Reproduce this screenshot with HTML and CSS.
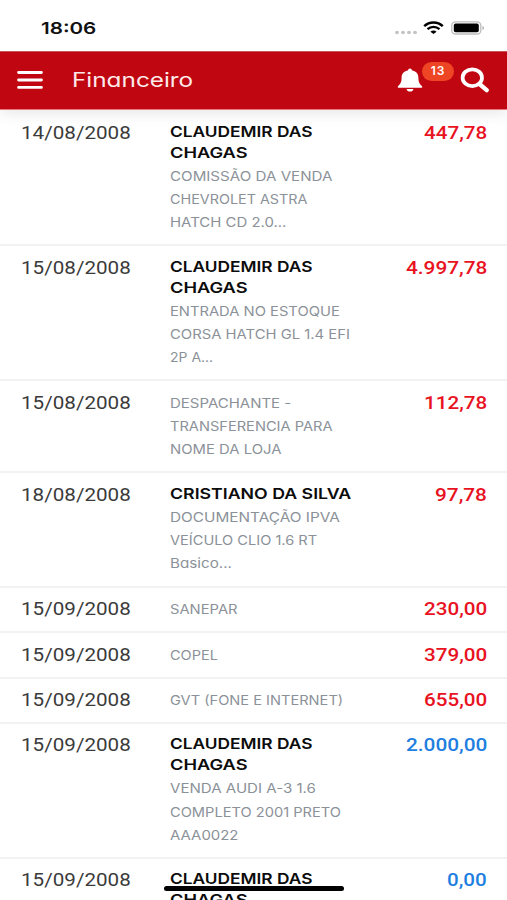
FILE: index.html
```html
<!DOCTYPE html>
<html lang="pt-BR">
<head>
<meta charset="utf-8">
<title>Financeiro</title>
<link rel="stylesheet" href="styles.css">
</head>
<body>
<div class="screen">
  <div class="status">
    <span class="clock" data-width="55">18:06</span>
    <div class="status-icons">
      <svg class="signal" width="24" height="5" viewBox="0 0 24 5" fill="#c4c4c4"><ellipse cx="3" cy="2.5" rx="2" ry="1.7"/><ellipse cx="9" cy="2.5" rx="2" ry="1.7"/><ellipse cx="15" cy="2.5" rx="2" ry="1.7"/><ellipse cx="21" cy="2.5" rx="2" ry="1.7"/></svg>
      <svg class="wifi" width="21" height="14" viewBox="0 0 21 14" fill="none" stroke="#000"><path d="M1.2 5.1C6.4.2 14.6.2 19.8 5.1" stroke-width="2.5"/><path d="M4.5 8.2c3.5-3.1 8.5-3.1 12 0" stroke-width="2.3"/><path d="M7.4 10.7c1.8-1.5 4.4-1.5 6.2 0L10.5 13z" fill="#000" stroke="none"/></svg>
      <svg class="battery" width="34" height="14" viewBox="0 0 34 14"><rect x=".8" y=".8" width="29" height="12.2" rx="3.6" fill="#fff" stroke="#bdbdbd" stroke-width="1.3"/><rect x="2.8" y="2.6" width="25" height="8.7" rx="1.8"/><path d="M31.5 5v4c2-.8 2-3.2 0-4z" fill="#aaa"/></svg>
    </div>
  </div>
  <header class="bar">
    <svg class="menu" width="26" height="20" viewBox="0 0 26 20" stroke="#fff" stroke-width="2.9" stroke-linecap="round"><path d="M1.6 2.5h22.8M1.6 10h22.8M1.6 17.4h22.8"/></svg>
    <h1 class="title"><span data-width="121">Financeiro</span></h1>
    <div class="bell">
      <svg width="26" height="24" viewBox="0 0 26 24" fill="#fff"><path d="M13 .5c-1.2 0-1.8.7-1.8 1.8C7 3.1 4.600 5.800 4.600 9.800c0 4.500-1.300 6.300-3.400 8.100-.9.800-.5 1.900.8 1.900h22c1.300 0 1.700-1.100.8-1.900-2.100-1.800-3.400-3.600-3.400-8.100 0-4-2.400-6.700-6.600-7.500C14.800 1.200 14.200.500 13 .500z"/><path d="M9.500 21h7c-.3 1.700-1.700 2.600-3.500 2.600S9.800 22.700 9.500 21z"/></svg>
      <span class="badge">13</span>
    </div>
    <svg class="search" width="30" height="26" viewBox="0 0 30 26" fill="none" stroke="#fff"><ellipse cx="12.300" cy="10.700" rx="9.700" ry="8.400" stroke-width="3.700"/><path d="M19.500 17l7.200 6.100" stroke-width="4.300" stroke-linecap="round"/></svg>
  </header>
  <main class="list">
    <article class="row">
      <div class="date"><span data-width="110">14/08/2008</span></div>
      <div class="info">
        <div class="name"><span data-width="143">CLAUDEMIR DAS</span><span data-width="77">CHAGAS</span></div>
        <div class="desc"><span data-width="163">COMISSÃO DA VENDA</span><span data-width="138">CHEVROLET ASTRA</span><span data-width="116">HATCH CD 2.0...</span></div>
      </div>
      <div class="amount out"><span data-width="63">447,78</span></div>
    </article>
    <article class="row">
      <div class="date"><span data-width="110">15/08/2008</span></div>
      <div class="info">
        <div class="name"><span data-width="143">CLAUDEMIR DAS</span><span data-width="77">CHAGAS</span></div>
        <div class="desc"><span data-width="170">ENTRADA NO ESTOQUE</span><span data-width="180">CORSA HATCH GL 1.4 EFI</span><span data-width="43">2P A...</span></div>
      </div>
      <div class="amount out"><span data-width="81">4.997,78</span></div>
    </article>
    <article class="row">
      <div class="date"><span data-width="110">15/08/2008</span></div>
      <div class="info">
        <div class="desc"><span data-width="121">DESPACHANTE -</span><span data-width="163">TRANSFERENCIA PARA</span><span data-width="112">NOME DA LOJA</span></div>
      </div>
      <div class="amount out"><span data-width="63">112,78</span></div>
    </article>
    <article class="row">
      <div class="date"><span data-width="110">18/08/2008</span></div>
      <div class="info">
        <div class="name"><span data-width="181">CRISTIANO DA SILVA</span></div>
        <div class="desc"><span data-width="170">DOCUMENTAÇÃO IPVA</span><span data-width="147">VEÍCULO CLIO 1.6 RT</span><span data-width="62">Basico...</span></div>
      </div>
      <div class="amount out"><span data-width="52">97,78</span></div>
    </article>
    <article class="row">
      <div class="date"><span data-width="110">15/09/2008</span></div>
      <div class="info"><div class="desc"><span data-width="68">SANEPAR</span></div></div>
      <div class="amount out"><span data-width="63">230,00</span></div>
    </article>
    <article class="row">
      <div class="date"><span data-width="110">15/09/2008</span></div>
      <div class="info"><div class="desc"><span data-width="48">COPEL</span></div></div>
      <div class="amount out"><span data-width="63">379,00</span></div>
    </article>
    <article class="row">
      <div class="date"><span data-width="110">15/09/2008</span></div>
      <div class="info"><div class="desc"><span data-width="173">GVT (FONE E INTERNET)</span></div></div>
      <div class="amount out"><span data-width="63">655,00</span></div>
    </article>
    <article class="row">
      <div class="date"><span data-width="110">15/09/2008</span></div>
      <div class="info">
        <div class="name"><span data-width="143">CLAUDEMIR DAS</span><span data-width="77">CHAGAS</span></div>
        <div class="desc"><span data-width="146">VENDA AUDI A-3 1.6</span><span data-width="171">COMPLETO 2001 PRETO</span><span data-width="69">AAA0022</span></div>
      </div>
      <div class="amount in"><span data-width="81">2.000,00</span></div>
    </article>
    <article class="row">
      <div class="date"><span data-width="110">15/09/2008</span></div>
      <div class="info">
        <div class="name"><span data-width="143">CLAUDEMIR DAS</span><span data-width="77">CHAGAS</span></div>
      </div>
      <div class="amount in"><span data-width="40">0,00</span></div>
    </article>
  </main>
  <div class="home-indicator"></div>
</div>
<script src="fit.js"></script>
</body>
</html>
```
FILE: styles.css
```css
* {
  box-sizing: border-box;
}

body {
  margin: 0;
  background: #fff;
  overflow: hidden;
}

.screen {
  position: relative;
  width: 507px;
  height: 900px;
  overflow: hidden;
  display: flex;
  flex-direction: column;
  font-family: Inter, "Open Sans", sans-serif;
  font-feature-settings: "cv11";
}

[data-width] {
  display: block;
  width: max-content;
  white-space: nowrap;
  transform-origin: left center;
}

.status {
  position: relative;
  z-index: 2;
  flex: none;
  height: 51px;
  padding: 4px 22px 0 41px;
  display: flex;
  align-items: center;
  justify-content: space-between;
  background: #fff;
}

.clock {
  font-size: 16.500px;
  font-weight: 600;
  line-height: 20px;
  color: #111;
}

.status-icons {
  display: flex;
  align-items: center;
}

.signal {
  margin: 9px 5px 0 0;
}

.wifi {
  margin-right: 7px;
}

.bar {
  flex: none;
  height: 59px;
  padding: 0 18px 2px 17px;
  display: flex;
  align-items: center;
  background: #c00711;
  border-top: 1px solid #c9545a;
  border-bottom: 1px solid #e9787e;
  box-shadow: 0 3px 14px rgba(0, 0, 0, 0.1);
  z-index: 1;
}

.title {
  margin: 0 0 0 29px;
  font-size: 19.500px;
  font-weight: 400;
  line-height: 28px;
  color: #ffeaea;
}

.bell {
  position: relative;
  margin-left: auto;
  height: 24px;
}

.badge {
  position: absolute;
  left: 25px;
  top: -6px;
  width: 32px;
  height: 19px;
  border-radius: 10px;
  background: #ee4524;
  color: #fff;
  font-size: 12px;
  font-weight: 600;
  line-height: 18px;
  letter-spacing: 0.8px;
  text-align: center;
}

.search {
  margin-left: 37px;
  margin-right: -1px;
}

.list {
  flex: none;
  padding-top: 1px;
  display: grid;
  grid-template-rows: 135px 135px 92px 114.500px 45.500px 45.500px 45px 135px 135px;
}

.row {
  display: grid;
  grid-template-columns: 149px 1fr auto;
  padding: 10.600px 20px 0 20.500px;
  border-bottom: 2px solid #f2f2f2;
}

.date,
.amount {
  font-family: Roboto, sans-serif;
  font-size: 18px;
  line-height: 21px;
}

.date {
  color: #3b3b3b;
}

.amount {
  font-weight: 500;
}

.amount [data-width] {
  transform-origin: right center;
}

.out {
  color: #e8131f;
}

.in {
  color: #1f7fe0;
}

.name {
  margin-bottom: 1px;
  font-size: 14.900px;
  font-weight: 600;
  line-height: 21px;
  color: #0c0c0c;
}

.desc {
  font-size: 13px;
  line-height: 23.400px;
  color: #8b9198;
}

.home-indicator {
  position: absolute;
  left: 164px;
  bottom: 9px;
  width: 180px;
  height: 5px;
  border-radius: 3px;
  background: #000;
  z-index: 2;
}
```
FILE: fit.js
```js
document.querySelectorAll("[data-width]").forEach((el) => {
  const natural = el.offsetWidth;
  el.style.transform = `scaleX(${Number(el.dataset.width) / natural})`;
});
```
